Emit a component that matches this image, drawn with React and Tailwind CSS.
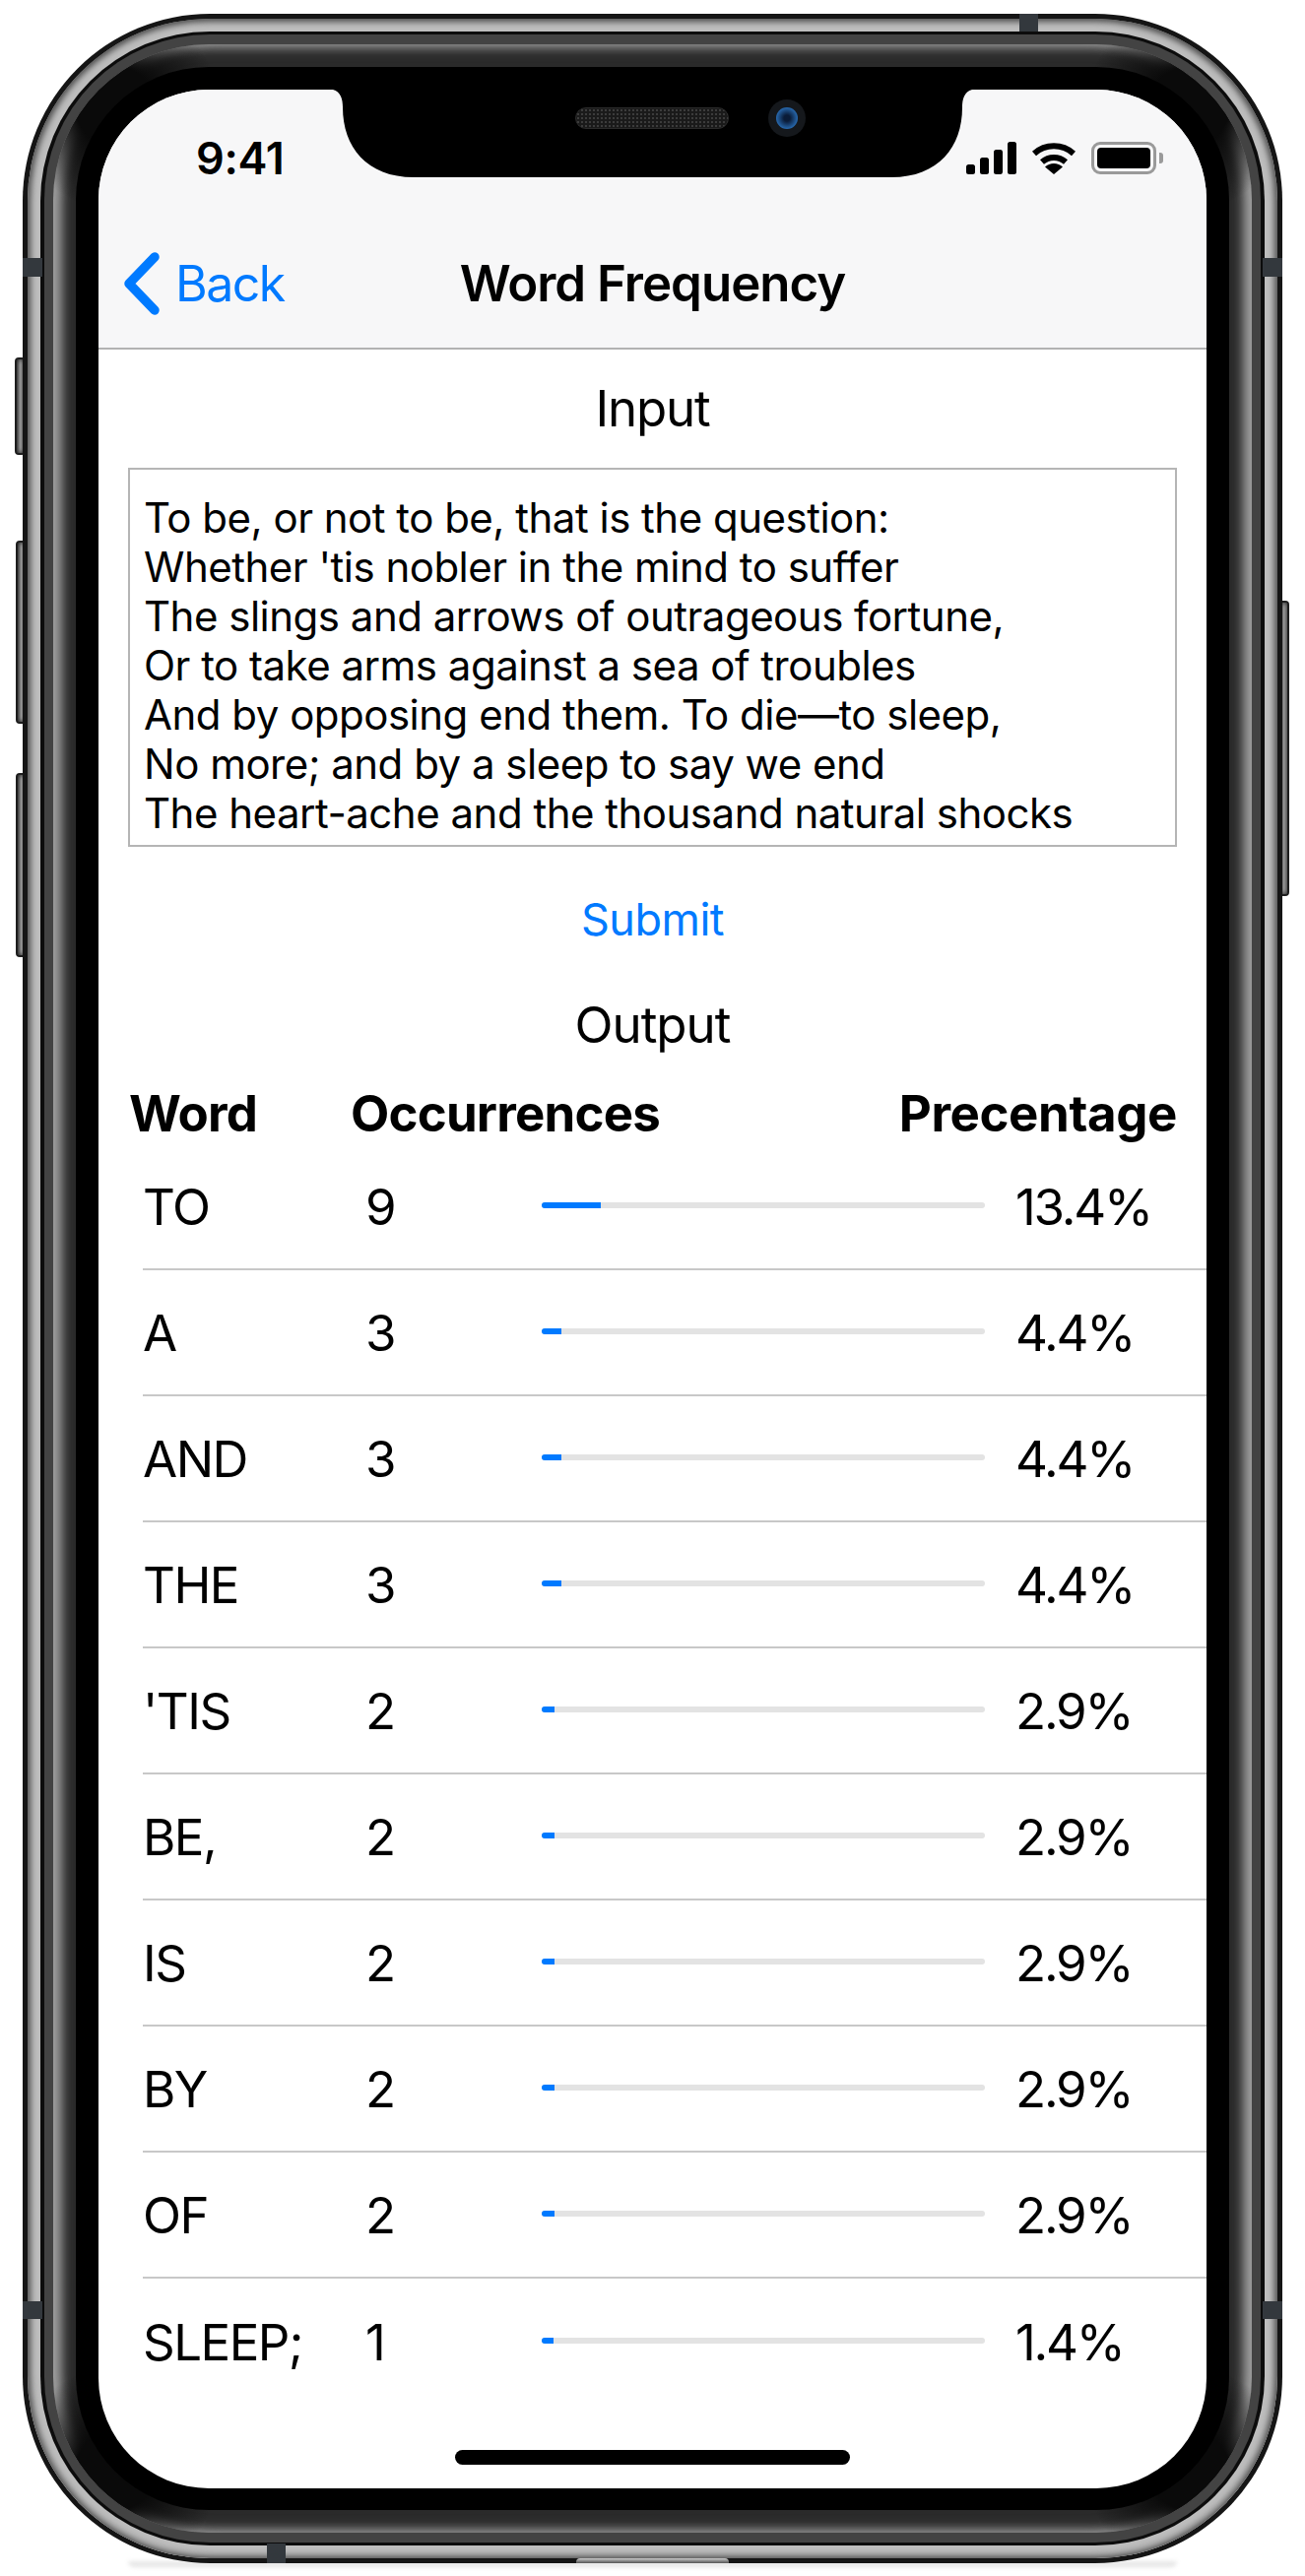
import React from 'react'

const rows = [
  { word: 'TO', count: 9, pct: 13.4 },
  { word: 'A', count: 3, pct: 4.4 },
  { word: 'AND', count: 3, pct: 4.4 },
  { word: 'THE', count: 3, pct: 4.4 },
  { word: "'TIS", count: 2, pct: 2.9 },
  { word: 'BE,', count: 2, pct: 2.9 },
  { word: 'IS', count: 2, pct: 2.9 },
  { word: 'BY', count: 2, pct: 2.9 },
  { word: 'OF', count: 2, pct: 2.9 },
  { word: 'SLEEP;', count: 1, pct: 1.4 },
]

const poem = [
  'To be, or not to be, that is the question:',
  "Whether 'tis nobler in the mind to suffer",
  'The slings and arrows of outrageous fortune,',
  'Or to take arms against a sea of troubles',
  'And by opposing end them. To die—to sleep,',
  'No more; and by a sleep to say we end',
  'The heart-ache and the thousand natural shocks',
]

function SideButton({ className }) {
  return (
    <div className={`absolute w-[11px] rounded-[4px] border-2 border-[#1d1d1d] bg-gradient-to-r from-[#555] via-[#a8a8a8] to-[#8a8a8a] shadow-[inset_0_0_5px_#222] ${className}`} />
  )
}

function Antenna({ className }) {
  return <div className={`absolute bg-[#33383d] ${className}`} />
}

function StatusIcons() {
  return (
    <div className="flex items-center gap-[15px]">
      <svg width="51" height="33" viewBox="0 0 51 33">
        <rect x="0" y="23" width="9" height="10" rx="2.5" fill="#000" />
        <rect x="14" y="16" width="9" height="17" rx="2.5" fill="#000" />
        <rect x="28" y="8" width="9" height="25" rx="2.5" fill="#000" />
        <rect x="42" y="0" width="9" height="33" rx="2.5" fill="#000" />
      </svg>
      <svg width="46" height="33" viewBox="0 0 46 33">
        <path d="M3 12 A30 30 0 0 1 43 12" fill="none" stroke="#000" strokeWidth="6" />
        <path d="M11 20.5 A18 18 0 0 1 35 20.5" fill="none" stroke="#000" strokeWidth="6" />
        <path d="M23 33 L14 25.5 A13 13 0 0 1 32 25.5 Z" fill="#000" />
      </svg>
      <div className="flex items-center gap-[3px]">
        <div className="w-[66px] h-[33px] rounded-[9px] border-[3px] border-[#9a9a9a] p-[3px]">
          <div className="w-full h-full rounded-[4px] bg-black" />
        </div>
        <div className="w-[4px] h-[11px] rounded-r-[3px] bg-[#9a9a9a]" />
      </div>
    </div>
  )
}

function Notch() {
  return (
    <svg className="absolute left-[238px] top-0" width="649" height="90" viewBox="0 0 649 90">
      <path
        d="M0 0 C8 2 10 10 10 18 C10 58 34 89 82 89 L567 89 C615 89 639 58 639 18 C639 10 641 2 649 0 Z"
        fill="#000"
      />
    </svg>
  )
}

function Row({ item, last }) {
  return (
    <div className={`flex items-center h-[128px] text-[51px] text-black ${last ? '' : 'border-b-2 border-[#c8c8c8]'}`}>
      <div className="w-[226px] pt-[2px] tracking-[-1.5px]">{item.word}</div>
      <div className="w-[179px] pt-[2px]">{item.count}</div>
      <div className="w-[450px] h-[6px] rounded-full bg-[#e3e3e3] overflow-hidden mb-[2px]">
        <div className="h-full min-w-[12px] bg-[#007aff]" style={{ width: `${item.pct}%` }} />
      </div>
      <div className="ml-[31px] pt-[2px] tracking-[-2.2px]">{item.pct}%</div>
    </div>
  )
}

function Screen() {
  return (
    <div className="relative w-[1125px] h-[2436px] rounded-[112px] bg-white overflow-hidden">
      <div className="h-[264px] bg-[#f7f7f8] border-b-2 border-[#b2b2b2]">
        <div className="flex justify-between items-center h-[129px] pt-[9px] pl-[99px] pr-[44px]">
          <div className="text-[45px] leading-[33px] font-semibold text-black tracking-[-0.3px]">9:41</div>
          <StatusIcons />
        </div>
        <div className="relative flex items-center justify-center h-[132px]">
          <div className="absolute left-[25px] top-[36px] flex items-center gap-[15px] text-[#007aff]">
            <svg width="38" height="64" viewBox="0 0 38 64">
              <path d="M32 5 L6 32 L32 59" fill="none" stroke="#007aff" strokeWidth="9.5" strokeLinecap="round" strokeLinejoin="round" />
            </svg>
            <span className="text-[50px] leading-[60px] tracking-[-1.5px]">Back</span>
          </div>
          <div className="text-[51px] font-semibold text-black tracking-[-1px] pt-[5px]">Word Frequency</div>
        </div>
      </div>

      <div className="h-[120px] flex items-center justify-center text-[51px] tracking-[-1.2px] text-black">Input</div>
      <div className="mx-[30px] h-[385px] border-2 border-[#b5b5b5] px-[14px] pt-[24px] overflow-hidden text-[42px] leading-[50px] tracking-[-0.5px] text-black">
        {poem.map((line) => (
          <div key={line}>{line}</div>
        ))}
      </div>
      <div className="h-[148px] flex items-center justify-center text-[45px] tracking-[-0.5px] text-[#007aff]">Submit</div>
      <div className="h-[66px] flex items-center justify-center text-[51px] tracking-[-1px] text-black">Output</div>
      <div className="flex justify-between items-center pl-[31px] pr-[30px] h-[88px] pt-[26px] text-[51px] font-bold tracking-[-0.8px] text-black">
        <div className="flex">
          <div className="w-[225px]">Word</div>
          <div>Occurrences</div>
        </div>
        <div className="tracking-[-0.4px]">Precentage</div>
      </div>
      <div className="pl-[45px]">
        {rows.map((item, i) => (
          <Row key={item.word} item={item} last={i === rows.length - 1} />
        ))}
      </div>
      <Notch />
      <div className="absolute left-[484px] top-[18px] w-[156px] h-[22px] rounded-full border border-[#2a2a2a] bg-[#1a1a1a] bg-[radial-gradient(circle,_#3c3c3c_1px,_transparent_1px)] bg-[length:4px_4px]" />
      <div className="absolute left-[680px] top-[10px] w-[38px] h-[38px] rounded-full bg-[#15181c] flex items-center justify-center">
        <div className="w-[22px] h-[22px] rounded-full bg-[radial-gradient(circle,_#0a1c38_20%,_#2a6fb8_75%)]" />
      </div>
      <div className="absolute left-[362px] top-[2397px] w-[401px] h-[15px] rounded-full bg-black" />
    </div>
  )
}

export default function App() {
  return (
    <div className="relative w-[1325px] h-[2616px] bg-white overflow-hidden pt-[14px] pl-[23px] font-['Inter',sans-serif]">
      <SideButton className="left-[15px] top-[363px] h-[99px]" />
      <SideButton className="left-[16px] top-[549px] h-[186px]" />
      <SideButton className="left-[16px] top-[785px] h-[187px]" />
      <SideButton className="left-[1298px] top-[610px] h-[300px]" />
      <div className="absolute left-[130px] top-[2601px] w-[1065px] h-[6px] bg-[#e6e6e6] rounded-b-full blur-[2px]" />

      <div className="relative w-[1279px] h-[2589px] rounded-[190px] bg-[#151515] p-[5px]">
        <div className="w-full h-full rounded-[185px] bg-[#bdbdbd] shadow-[inset_0_0_6px_3px_#4a4a4a,inset_0_-4px_4px_#ddd] p-[13px]">
          <div className="w-full h-full rounded-[172px] bg-[#0c0c0c] px-[4px] py-[3px]">
            <div className="w-full h-full rounded-[168px] bg-[#434343] px-[9px] py-[10px]">
              <div className="relative w-full h-full rounded-[158px] bg-[#2a2a2a] shadow-[inset_10px_0_12px_-2px_#a0a0a0,inset_-10px_0_12px_-2px_#a0a0a0,inset_0_0_14px_3px_#6a6a6a] p-[23px]">
                <div className="absolute inset-0 rounded-[158px] bg-[radial-gradient(circle_at_62px_62px,_#0a0a0a_40px,_transparent_105px),radial-gradient(circle_at_calc(100%-62px)_62px,_#0a0a0a_40px,_transparent_105px),radial-gradient(circle_at_62px_calc(100%-62px),_#0a0a0a_40px,_transparent_105px),radial-gradient(circle_at_calc(100%-62px)_calc(100%-62px),_#0a0a0a_40px,_transparent_105px)]" />
                <div className="relative w-full h-full rounded-[135px] bg-black p-[23px]">
                  <Screen />
                </div>
              </div>
            </div>
          </div>
        </div>

        <Antenna className="left-0 top-[248px] w-[20px] h-[19px]" />
        <Antenna className="left-[1259px] top-[248px] w-[20px] h-[19px]" />
        <Antenna className="left-0 top-[2323px] w-[20px] h-[18px]" />
        <Antenna className="left-[1259px] top-[2323px] w-[20px] h-[18px]" />
        <Antenna className="left-[1012px] top-0 w-[19px] h-[18px]" />
        <Antenna className="left-[248px] top-[2569px] w-[19px] h-[20px]" />
        <div className="absolute left-[562px] top-[2584px] w-[155px] h-[5px] rounded-t-[4px] bg-gradient-to-b from-[#ccc] to-[#555]" />
      </div>
    </div>
  )
}
